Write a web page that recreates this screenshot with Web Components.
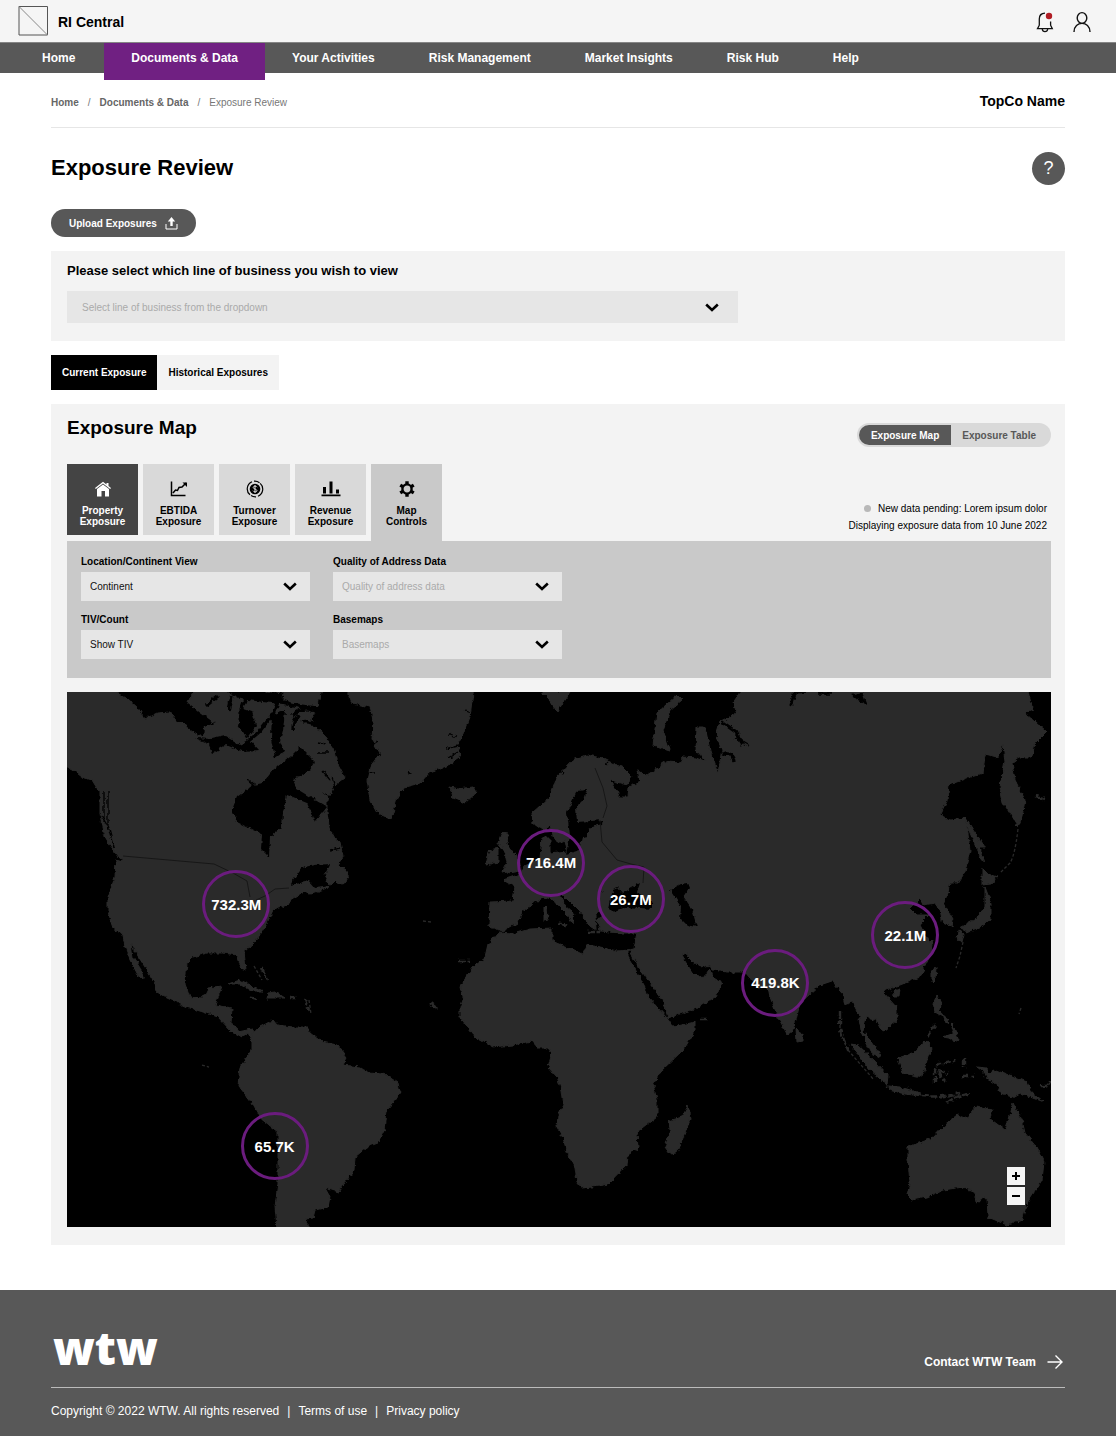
<!DOCTYPE html>
<html lang="en">
<head>
<meta charset="utf-8">
<meta name="viewport" content="width=device-width, initial-scale=1">
<title>RI Central – Exposure Review</title>
<style>
  body { margin: 0; background: #fff; color: #000; font-family: "Liberation Sans", Arial, sans-serif; font-size: 10px; }
  main { padding: 0 51px 45px; }
</style>
</head>
<body>
<ri-header></ri-header>
<ri-nav></ri-nav>
<main>
  <ri-crumbs></ri-crumbs>
  <ri-title>Exposure Review</ri-title>
  <ri-business></ri-business>
  <ri-tabs></ri-tabs>
  <ri-exposure></ri-exposure>
</main>
<ri-footer></ri-footer>

<script>
const base = `*{box-sizing:border-box} :host{display:block} button{font:inherit;color:inherit;border:0;padding:0;margin:0;background:none;cursor:pointer} a{color:inherit;text-decoration:none} svg{display:block} h1,h2,p{margin:0}`;
function define(name, css, html) {
  customElements.define(name, class extends HTMLElement {
    constructor() {
      super();
      const t = document.createElement('template');
      t.innerHTML = `<style>${base}${css}</style>${typeof html === 'function' ? html(this) : html}`;
      this.attachShadow({ mode: 'open' }).append(t.content.cloneNode(true));
    }
  });
}

define('ri-header', `
  header{display:flex;align-items:center;justify-content:space-between;height:42px;padding:0 24px 0 18px;background:#f5f5f5}
  .brand{display:flex;align-items:center;gap:9px;font-size:14px;font-weight:bold}
  .brand span{padding-top:2px}
  .actions{display:flex;align-items:center;gap:17px;padding-top:2px}`,
  `<header><a class="brand" href="#"><svg width="31" height="31" viewBox="0 0 31 31" fill="none" stroke="#555"><path d="M1 .5h28.500v28.500h-28.500z"/><path d="M1 .5l28.500 28.500" stroke="#888"/></svg><span>RI Central</span></a>
  <div class="actions">
   <button aria-label="Notifications"><svg width="20" height="22" viewBox="0 0 20 22" fill="none" stroke="#111" stroke-width="1.300"><path d="M10 2.200C6 2.200 4.300 5 4.300 8v6.200L2.500 17.700h14.800L15.600 14.200V10.500"/><path d="M7.300 18c.3 3.600 5 3.600 5.400 0"/><circle cx="14" cy="5" r="3.200" fill="#b01c24" stroke="none"/></svg></button>
   <button aria-label="Account"><svg width="20" height="22" viewBox="0 0 20 22" fill="none" stroke="#111" stroke-width="1.400"><ellipse cx="10" cy="7" rx="4.800" ry="5.400"/><path d="M2 21c0-11.500 16-11.500 16 0"/></svg></button>
  </div></header>`);

define('ri-nav', `
  nav{display:flex;align-items:flex-start;height:31px;padding-left:15px;background:#585858;border-top:1px solid #858585;color:#fff;font-size:12px;font-weight:bold}
  a{height:30px;line-height:30px;padding:0 27px}
  a.on{height:37px;margin-left:2px;background:#702082}`,
  `<nav aria-label="Main"><a href="#">Home</a><a class="on" href="#" aria-current="page">Documents &amp; Data</a><a href="#">Your Activities</a><a href="#">Risk Management</a><a href="#">Market Insights</a><a href="#">Risk Hub</a><a href="#">Help</a></nav>`);

define('ri-crumbs', `
  div{display:flex;align-items:center;justify-content:space-between;height:55px;border-bottom:1px solid #e6e6e6}
  nav{display:flex;gap:9px;color:#666;padding-top:4px}
  nav a{font-weight:bold} span{color:#777}
  strong{font-size:14px;padding-top:1px}`,
  `<div><nav aria-label="Breadcrumb"><a href="#">Home</a><span>/</span><a href="#">Documents &amp; Data</a><span>/</span><span>Exposure Review</span></nav><strong>TopCo Name</strong></div>`);

define('ri-title', `
  .row{display:flex;align-items:center;justify-content:space-between;padding:24px 0}
  h1{font-size:22px;line-height:30px;padding-bottom:2px}
  .help{width:33px;height:33px;border-radius:50%;background:#585858;color:#fff;font-size:18px}
  .upload{display:flex;align-items:center;gap:8px;height:28px;padding:0 18px;border-radius:14px;background:#585858;color:#fff;font-weight:bold}`,
  `<div class="row"><h1><slot></slot></h1><button class="help" aria-label="Help">?</button></div>
   <button class="upload">Upload Exposures<svg width="13" height="13" viewBox="0 0 13 13" fill="none" stroke="#fff"><path d="M1 7v5h11V7"/><path d="M6.500 9V3.500" stroke-width="2.400"/><path d="M6.500 0l3.700 4.500H2.800z" fill="#fff" stroke="none"/></svg></button>`);

let uid = 0;
define('ri-select', `
  :host{min-width:0}
  label{display:block;font-weight:bold;line-height:13px;margin-bottom:4px}
  label.big{font-size:13px;line-height:16px;margin-bottom:12px}
  .box{display:grid;align-items:center}
  .box>*{grid-area:1/1}
  select{appearance:none;width:100%;height:29px;padding:0 9px;border:0;border-radius:0;background:#e6e6e6;color:#111;font:inherit}
  select.hint{color:#aaa}
  .tall select{height:32px;padding:0 15px}
  svg{justify-self:end;margin-right:13px;pointer-events:none}
  .tall svg{margin-right:19px}`,
  el => { const id = 'f' + (++uid), big = el.hasAttribute('big');
    return `<label for="${id}" class="${big ? 'big' : ''}">${el.getAttribute('label')}</label>
    <div class="box ${big ? 'tall' : ''}"><select id="${id}" class="${el.hasAttribute('hint') ? 'hint' : ''}"><option>${el.getAttribute('value')}</option></select>
    <svg width="14" height="9" viewBox="0 0 14 9" fill="none" stroke="#000" stroke-width="2.600"><path d="M1.200 1.500L7 7l5.800-5.500"/></svg></div>`; });

define('ri-business', `
  section{margin-top:14px;padding:12px 16px 18px;background:#f3f3f3}
  ri-select{max-width:671px}`,
  `<section><ri-select big hint label="Please select which line of business you wish to view" value="Select line of business from the dropdown"></ri-select></section>`);

define('ri-tabs', `
  div{display:flex;margin:14px 0}
  button{height:35px;padding:0 11px;font-weight:bold;background:#f3f3f3}
  button.on{background:#000;color:#fff}`,
  `<div role="tablist"><button class="on" role="tab" aria-selected="true">Current Exposure</button><button role="tab" aria-selected="false">Historical Exposures</button></div>`);

define('ri-tile', `
  button{display:flex;flex-direction:column;align-items:center;justify-content:flex-start;gap:7px;width:71px;height:71px;padding-top:16px;background:#d9d9d9;font-weight:bold;line-height:11px}
  :host([on]) button{background:#444;color:#fff}
  :host([open]) button{height:77px;background:#c9c9c9}
  span{max-width:56px}`,
  `<button><slot name="icon"></slot><span><slot></slot></span></button>`);

/* World land outlines and inland waters, drawn on a 984 x 535 window whose origin is 67,692. */
const land = [
 "67,692 115,692 128,699 138,708 145,719 157,713 170,712 177,722 188,725 198,730 203,735 188,714 186,706 193,692 222,692 320,692 318,708 311,719 325,737 333,748 337,763 345,778 333,787 327,800 327,812 330,833 340,842 343,857 338,864 346,870 348,880 343,884 334,881 327,888 310,894 303,892 290,900 287,905 273,910 267,923 260,935 250,947 244,950 246,970 241,968 237,955 223,953 207,953 193,957 187,963 185,983 190,997 203,998 208,988 222,986 215,1005 232,1008 231,1023 238,1032 252,1029 255,1035 252,1040 248,1033 242,1037 230,1030 218,1017 203,1012 187,1007 167,998 157,992 155,983 145,967 138,956 131,943 133,957 140,968 144,979 138,975 130,960 125,947 123,935 113,928 108,913 108,897 115,877 116,860 123,862 110,845 103,833 100,813 100,793 92,780 82,777 73,770 67,767",
 "252,1036 260,1027 273,1020 277,1025 293,1027 307,1027 310,1032 323,1042 337,1045 347,1058 343,1065 360,1067 367,1072 383,1073 398,1083 400,1092 393,1103 387,1110 385,1130 378,1143 367,1147 355,1157 354,1170 347,1180 338,1192 325,1188 330,1197 328,1207 315,1210 313,1218 305,1219 308,1227 277,1227 275,1207 278,1183 278,1132 260,1118 252,1103 238,1085 240,1067 252,1050",
 "348,692 352,703 370,707 373,720 372,740 380,753 370,767 367,780 370,800 377,813 391,819 397,798 405,787 420,783 430,772 453,763 460,758 458,743 465,730 470,717 473,692",
 "450,787 458,789 473,787 477,792 465,803 453,798",
 "498,933 513,934 530,929 552,928 552,940 568,947 583,954 587,945 600,947 617,951 630,950 633,957 638,966 650,983 663,1000 668,1018 697,1008 715,997 723,983 713,977 710,968 705,976 697,977 692,972 681,955 687,953 692,962 702,967 710,965 713,970 727,972 745,972 758,988 768,987 770,997 778,1017 787,1034 792,1032 796,1020 800,1003 820,985 832,981 842,992 845,1005 853,1002 858,1012 861,1030 872,1053 882,1058 863,1030 866,1017 877,1020 883,1032 897,1020 897,1008 883,992 893,987 900,985 920,977 928,960 933,940 930,943 920,923 928,915 917,915 910,908 920,898 923,905 935,903 940,910 943,923 952,927 953,920 943,903 947,897 950,883 958,883 965,872 970,850 968,833 965,818 950,820 940,815 947,800 949,785 967,778 983,773 985,755 997,758 1003,744 1005,762 1000,787 1003,802 1018,827 1022,817 1025,800 1015,780 1012,763 1020,757 1032,757 1035,743 1046,732 1025,713 1033,710 1028,692 740,692 733,703 737,713 720,722 716,736 722,750 718,773 710,750 705,727 697,727 696,750 707,762 697,758 683,757 680,763 667,762 647,775 638,770 640,782 628,787 627,797 620,797 610,780 627,785 632,777 623,768 603,758 587,755 573,760 557,777 550,797 532,813 533,823 543,830 550,826 553,836 558,843 565,840 567,851 550,853 550,837 542,837 540,858 523,867 518,875 503,880 515,887 513,901 490,902 489,925 498,930 502,932 517,923 522,912 533,903 545,897 552,899 560,908 568,916 572,923 574,913 563,903 560,892 570,902 580,912 588,925 596,930 595,915 600,911 603,913 597,920 600,931 620,933 637,933 634,949 628,950 628,957 635,968 645,987 648,997 667,1018 673,1027 695,1022 695,1030 683,1050 660,1072 653,1085 657,1100 657,1117 637,1133 638,1148 628,1155 627,1165 610,1183 600,1186 582,1188 577,1182 575,1168 567,1152 563,1138 557,1127 558,1115 564,1105 562,1090 557,1077 548,1067 552,1053 548,1048 538,1048 532,1041 513,1045 493,1047 475,1037 460,1017 460,1008 463,1000 460,987 472,968 485,958 488,945",
 "688,1106 691,1118 683,1137 677,1153 670,1154 665,1147 670,1130 669,1121 682,1117",
 "502,833 508,834 507,843 518,860 520,870 502,873 507,863 505,853 498,843",
 "490,850 498,848 498,862 486,865 488,856",
 "677,695 682,700 670,710 663,730 670,750 653,745 657,713",
 "542,692 570,692 562,703 557,712 550,700",
 "544,907 547,907 548,919 544,920", "557,923 568,924 566,928",
 "982,868 988,874 997,877 991,884 982,885",
 "985,887 991,903 991,920 982,926 967,932 960,928 975,920 985,907",
 "959,930 964,934 962,942 958,940",
 "965,817 973,830 985,848 980,848 985,863 980,857 968,828",
 "932,970 936,968 935,979 932,982", "893,991 900,989 899,996 894,996",
 "937,995 942,1002 939,1010 945,1018 935,1012 933,1004",
 "943,1037 952,1034 954,1028 959,1040 954,1043 950,1038",
 "927,1040 932,1048 928,1057 922,1077 903,1073 898,1058 913,1053",
 "850,1044 858,1045 877,1063 888,1075 887,1085 870,1070",
 "887,1086 900,1087 917,1092 922,1096 905,1094 890,1090",
 "977,1067 987,1068 989,1074 997,1070 1027,1082 1032,1093 1043,1102 1020,1093 1013,1097 998,1092 1000,1086 987,1078 985,1073",
 "908,1147 933,1138 943,1127 958,1115 967,1118 975,1107 993,1110 989,1118 1005,1130 1009,1120 1013,1103 1022,1120 1025,1133 1037,1148 1044,1162 1042,1180 1027,1203 1022,1220 1007,1225 988,1217 987,1197 977,1202 975,1192 963,1187 943,1190 927,1197 912,1200 907,1195 910,1183 908,1160",
 "796,1028 802,1035 802,1041 797,1042",
 "228,984 240,980 263,991 252,991 241,984", "268,993 276,992 285,998 267,998", "250,997 257,998 252,1000"
];
const water = [
 "232,810 237,797 253,785 263,783 273,770 290,757 300,747 315,762 310,770 293,780 297,789 310,797 327,807 315,822 307,803 287,795 283,813 282,827 270,837 269,857 262,850 263,835 247,827 237,822",
 "195,738 212,739 225,736 240,745 250,740 259,750 241,751 226,745 213,753 209,744",
 "240,708 252,712 256,725 247,738 238,724",
 "184,700 197,710 205,720 215,723 204,727 203,737 188,728",
 "223,690 258,690 284,695 283,704 262,702 240,699",
 "272,715 285,711 283,730 280,742 284,752 275,758 271,738",
 "290,885 302,868 314,865 330,864 324,876 330,886 315,888 309,881",
 "670,890 681,884 687,883 689,888 683,897 692,910 697,927 687,925 680,918 681,907",
 "613,890 618,888 622,893 640,883 637,892 653,903 653,909 640,908 625,907 612,912 608,908 610,900",
 "577,791 587,790 584,799 576,807 577,822 603,820 602,824 588,828 588,837 582,838 579,850 566,854 570,836 567,812",
 "851,695 862,692 867,705 858,700"
];
const islets = "M922 1096q18 2 38 -3M947 1103q9 -8 22 -9M935 1083v-14l4 -6q12 1 16 -4M938 1070l9 3M938 1072l8 10M964 1058v10M962 1076h12M927 1037l8 -12M944 1018l8 6 2 8M1040 1086q10 1 10 -6M840 1012v12M840 1030l8 20M262 968l6 12M305 999l4 12M595 921h8M588 932h12M290 998h8M700 1019h7M458 961h12M430 1003l8 6M1035 796l10 3";
const chain = "M1018 829q-3 26 -8 34l-10 10M963 942l-3 14 -4 12M848 1050l26 30M840 1015v14M254 966l8 14M309 1000l2 14M202 1065l7 2M423 921l8 1M1021 1008l-2 6";
const straits = "M282 692l-9 22 -14 18 -12 10M283 702q16 5 36 6M232 696l-3 15M245 699l-4 12M292 716q12 -12 26 -4M293 731q0 -12 6 -16M302 722q8 -2 18 6M697 700l8 26 8 6 2 18M722 722l14 10 6 12M722 755q10 -6 12 7M791 706l4 -14 12 -1M818 693h14M196 712l14 10M206 706l12 -10";
const fjords = "M104 792v30M108 790v36l6 22M101 815l6 10M612 755l-6 10M318 742l8 2M317 752h12M322 770l8 10M332 778l4 12M323 792l12 12M735 738l14 8M560 770l4 4M248 780l7 6M372 745l6 -4M372 757l9 -3M368 772l7 1M457 737l-8 -3M462 745l-16 4M458 752l-10 6M470 712l-5 -2M411 775l-2 -5M330 850l10 -2M600 888l3 4";
const borders = "M123 856l91 8 19 9 14 8 3 16M256 900l9 -4 10 -7 14 -1M595 768l8 20 4 18 -4 12M600 820l2 22 15 18 14 4 13 3 -1 16";
const poly = a => a.map(p => `<polygon points="${p}"/>`).join('');

define('ri-pin', `
  :host{position:absolute;transform:translate(-50%,-50%)}
  button{width:68px;height:68px;border:3px solid #6b1c7e;border-radius:50%;color:#fff;font-size:15px;font-weight:bold}`,
  `<button><slot></slot></button>`);

define('ri-map', `
  :host{position:relative;margin-top:14px;background:#000;overflow:hidden}
  .world{width:100%;height:auto}
  .zoom{position:absolute;right:26px;bottom:22px;display:flex;flex-direction:column;gap:2px}
  .zoom button{display:grid;place-items:center;width:18px;height:18px;background:#f5f5f5}`,
  `<svg class="world" viewBox="67 692 984 535" role="img" aria-label="World map">
    <defs><filter id="coast" filterUnits="userSpaceOnUse" x="47" y="672" width="1024" height="575" color-interpolation-filters="sRGB"><feTurbulence type="fractalNoise" baseFrequency=".2" numOctaves="3" seed="4"/><feDisplacementMap in="SourceGraphic" scale="5" xChannelSelector="R" yChannelSelector="G"/></filter></defs>
    <g filter="url(#coast)"><rect x="47" y="672" width="1024" height="575" fill="#000"/><g fill="#2a2a2a" stroke="#2a2a2a" stroke-width="1">${poly(land)}<path d="M50 680H115V694H50zM193 680H320V694H193zM348 680H473V694H348zM740 680H1028V694H740zM277 1224h31v10h-31zM50 692h19v75h-19z"/></g>
    <g fill="#000">${poly(water)}</g>
    <path d="${straits}" fill="none" stroke="#000" stroke-width="3.500"/>
    <path d="${fjords}" fill="none" stroke="#000" stroke-width="1.300"/>
    <path d="${islets}" fill="none" stroke="#2a2a2a" stroke-width="2.400" stroke-dasharray="7 1.500"/></g>
    <path d="${chain}" fill="none" stroke="#2a2a2a" stroke-width="1.300" stroke-dasharray="3 2"/>
    <path d="${borders}" fill="none" stroke="#111" stroke-width=".8"/>
  </svg>
  <ri-pin style="left:17.200%;top:39.700%">732.3M</ri-pin>
  <ri-pin style="left:49.200%;top:31.900%">716.4M</ri-pin>
  <ri-pin style="left:57.300%;top:38.700%">26.7M</ri-pin>
  <ri-pin style="left:85.200%;top:45.500%">22.1M</ri-pin>
  <ri-pin style="left:72%;top:54.300%">419.8K</ri-pin>
  <ri-pin style="left:21.100%;top:84.900%">65.7K</ri-pin>
  <div class="zoom"><button aria-label="Zoom in"><svg width="8" height="8" stroke="#000" stroke-width="2"><path d="M0 4h8M4 0v8"/></svg></button><button aria-label="Zoom out"><svg width="8" height="8" stroke="#000" stroke-width="2"><path d="M0 4h8"/></svg></button></div>`);

define('ri-exposure', `
  section{padding:12px 14px 18px 16px;background:#f3f3f3}
  .head{display:flex;justify-content:space-between;align-items:flex-start}
  h2{font-size:19px;line-height:24px}
  .toggle{display:flex;margin-top:7px;padding:2px;border-radius:12px;background:#d9d9d9;font-weight:bold;color:#585858}
  .toggle button{height:20px;padding:0 13px 0 11px}
  .toggle .on{padding:0 12px;border-radius:10px 0 0 10px;background:#585858;color:#fff}
  .bar{display:flex;justify-content:space-between;align-items:flex-start;margin-top:17px}
  .tiles{display:flex;gap:5px}
  .info{align-self:flex-end;padding:0 4px 7px 0;text-align:right;line-height:17px}
  .info i{display:inline-block;width:7px;height:7px;margin-right:7px;border-radius:50%;background:#b8b8b8}
  .controls{display:grid;grid-template-columns:repeat(2,229px);gap:12px 23px;padding:14px 14px 19px;background:#c9c9c9}`,
  `<section>
   <div class="head"><h2>Exposure Map</h2><div class="toggle"><button class="on" aria-pressed="true">Exposure Map</button><button aria-pressed="false">Exposure Table</button></div></div>
   <div class="bar"><div class="tiles">
    <ri-tile on><svg slot="icon" width="18" height="18" viewBox="0 0 18 18" fill="#fff"><path d="M1 8L9 1.800l3.500 2.700V3h2v3L17 8l-.8.900L9 3.500 1.800 8.900z"/><path d="M3 9l6-4.600L15 9v7.500h-4V11H7.500v5.500H3z"/></svg>Property Exposure</ri-tile>
    <ri-tile><svg slot="icon" width="18" height="18" viewBox="0 0 18 18" fill="none" stroke="#000" stroke-width="1.500"><path d="M1.500 1.500v14h14M3 13l2.500-3 2 .5L9 7.500l3-.5 4-4"/><path d="M12.500 2.500H17V7z" fill="#000" stroke="none"/></svg>EBTIDA Exposure</ri-tile>
    <ri-tile><svg slot="icon" width="18" height="18" viewBox="0 0 18 18" fill="none" stroke="#000" stroke-width="1.200"><circle cx="9" cy="9" r="5.300" fill="#000" stroke="none"/><path d="M6 1.800a7.700 7.700 0 0 0-2 13M8 1.200a8 8 0 0 1 5.500 1.500M12 16.200a7.700 7.700 0 0 0 2.200-12.800M10 16.900a8 8 0 0 1-5-1.300"/><path d="M11 7.200C10.500 5.700 7.200 5.800 7.200 7.500S11 9 11 10.700 7.500 12.200 7 10.700M9 5v8" stroke="#d9d9d9" stroke-width="1"/></svg>Turnover Exposure</ri-tile>
    <ri-tile><svg slot="icon" width="20" height="18" viewBox="0 0 20 18" fill="#000"><path d="M.5 14.500h19v1.800H.5zM2 7h3v6.500H2zM8.500 1.500h3v12h-3zM15 9.500h3v4h-3z"/></svg>Revenue Exposure</ri-tile>
    <ri-tile open><svg slot="icon" width="18" height="18" viewBox="0 0 18 18" fill="none" stroke="#000"><circle cx="9" cy="9" r="4.600" stroke-width="2.400"/><path d="M9 1.200v3M9 13.800v3M2.250 5.100l2.600 1.500M13.150 11.400l2.600 1.500M2.250 12.900l2.600-1.500M13.150 6.600l2.600-1.500" stroke-width="3.400"/></svg>Map Controls</ri-tile>
   </div><div class="info"><p><i></i>New data pending: Lorem ipsum dolor</p><p>Displaying exposure data from 10 June 2022</p></div></div>
   <div class="controls">
    <ri-select label="Location/Continent View" value="Continent"></ri-select>
    <ri-select hint label="Quality of Address Data" value="Quality of address data"></ri-select>
    <ri-select label="TIV/Count" value="Show TIV"></ri-select>
    <ri-select hint label="Basemaps" value="Basemaps"></ri-select>
   </div>
   <ri-map></ri-map></section>`);

define('ri-footer', `
  footer{padding:34px 51px 17px;background:#585858;color:#fff;font-size:12px}
  .top{display:flex;justify-content:space-between;align-items:flex-end;height:64px;padding-bottom:17px;border-bottom:1px solid #bbb}
  .logo{font:800 46px/46px "Open Sans",sans-serif;padding-left:2px}
  .contact{display:flex;align-items:center;gap:11px;font-weight:bold;padding-right:2px}
  .legal{display:flex;gap:8px;padding-top:15px;line-height:16px}`,
  `<footer><div class="top"><a class="logo" href="#">wtw</a><a class="contact" href="#">Contact WTW Team<svg width="16" height="16" viewBox="0 0 16 16" fill="none" stroke="#fff" stroke-width="1.400"><path d="M.5 8h14M8.500 1.500L15 8l-6.500 6.500"/></svg></a></div>
   <div class="legal"><span>Copyright © 2022 WTW. All rights reserved</span><span>|</span><a href="#">Terms of use</a><span>|</span><a href="#">Privacy policy</a></div></footer>`);
</script>
</body>
</html>
